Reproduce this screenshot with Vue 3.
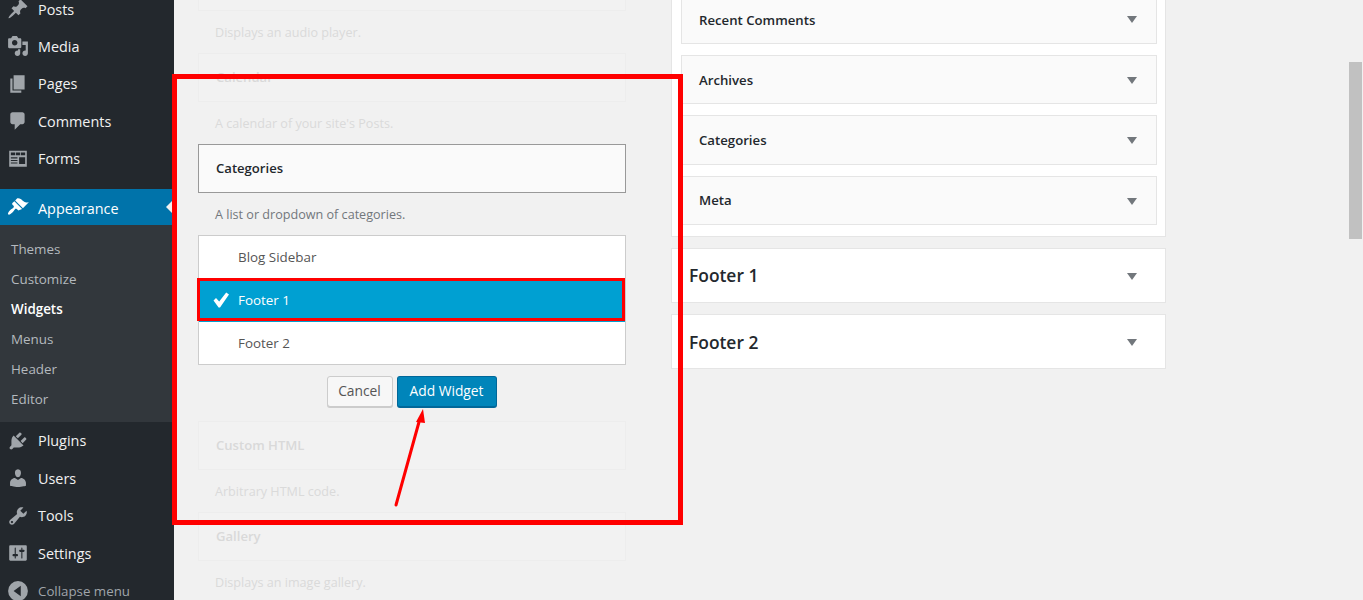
<script setup>
const icons = {
  posts: 'M10.44 3.02l1.82-1.82 6.36 6.35-1.83 1.82c-1.05-.68-2.48-.57-3.41.36l-.75.75c-.92.93-1.04 2.35-.35 3.41l-1.83 1.82-2.41-2.41-2.8 2.79c-.42.42-3.38 2.71-3.8 2.29s1.86-3.39 2.28-3.81l2.79-2.79L4.1 9.36l1.83-1.82c1.05.69 2.48.57 3.4-.36l.75-.75c.93-.92 1.05-2.35.36-3.41z',
  media: 'M13 11V4c0-.55-.45-1-1-1h-1.67L9 1H5L3.67 3H2c-.55 0-1 .45-1 1v7c0 .55.45 1 1 1h10c.55 0 1-.45 1-1zM7 4.5c1.38 0 2.5 1.12 2.5 2.5S8.38 9.5 7 9.5 4.5 8.38 4.5 7 5.62 4.5 7 4.5zM14 6h5v10.5c0 1.38-1.12 2.5-2.5 2.5S14 17.88 14 16.5s1.12-2.5 2.5-2.5c.17 0 .34.02.5.05V9h-3V6zm-4 8.05V13h2v3.5c0 1.38-1.12 2.5-2.5 2.5S7 17.88 7 16.5 8.12 14 9.5 14c.17 0 .34.02.5.05z',
  pages: 'M6 15V2h10v13H6zm-1 1h8v2H3V5h2v11z',
  comments: 'M5 2h9c1.1 0 2 .9 2 2v7c0 1.1-.9 2-2 2h-2l-5 5v-5H5c-1.1 0-2-.9-2-2V4c0-1.1.9-2 2-2z',
  forms: 'M2 2.5h16v14.5H2zM3.5 4v2.5h4V4zm4.7 0v2.5h3.6V4zm4.3 0v2.5h4V4zM3.5 8.5v1.1h6V8.5zm0 2.3v1.1h6v-1.1zm0 2.3v1.1h6v-1.1zM11 8.5v6h5.5v-6z',
  appearance: 'M14.48 11.06L7.41 3.99l1.5-1.5c.5-.56 2.3-.47 3.51.32 1.21.8 1.43 1.28 2.91 2.1 1.18.64 2.45 1.26 4.45.85zm-.71.71L6.7 4.7 4.93 6.47c-.39.39-.39 1.02 0 1.41l1.06 1.06c.39.39.39 1.03 0 1.42-.6.6-1.43 1.11-2.21 1.69-.35.26-.7.53-1.01.84-1.43 1.43-2.4 3.11-1.7 3.81.7.7 2.38-.27 3.81-1.7.31-.31.58-.66.84-1.01.58-.78 1.09-1.61 1.69-2.21.39-.39 1.03-.39 1.42 0l1.06 1.06c.39.39 1.02.39 1.41 0z',
  plugins: 'M13.11 4.36L9.87 7.6 8 5.73l3.24-3.24c.35-.34 1.05-.2 1.56.32.52.51.66 1.21.31 1.55zm-8 1.77l.91-1.12 9.01 9.01-1.19.84c-.71.71-2.63 1.16-3.82 1.16H6.14L4.9 17.26c-.59.59-1.54.59-2.12 0-.59-.58-.59-1.53 0-2.12l1.24-1.24v-3.88c0-1.13.4-3.19 1.09-3.89zm7.26 3.97l3.24-3.24c.34-.35 1.04-.21 1.55.31.52.51.66 1.21.31 1.55l-3.24 3.25z',
  users: 'M10 9.25c-2.27 0-2.73-3.44-2.73-3.44C7 4.02 7.82 2 9.97 2c2.16 0 2.98 2.02 2.71 3.81 0 0-.41 3.44-2.68 3.44zm0 2.57L12.72 10c2.39 0 4.52 2.33 4.52 4.53v2.49s-3.65 1.13-7.24 1.13c-3.65 0-7.24-1.13-7.24-1.13v-2.49c0-2.25 1.94-4.48 4.47-4.48z',
  tools: 'M16.68 9.77c-1.34 1.34-3.3 1.67-4.95.99l-5.41 6.52c-.99.99-2.59.99-3.58 0s-.99-2.59 0-3.57l6.52-5.42c-.68-1.65-.35-3.61.99-4.95 1.28-1.28 3.12-1.62 4.72-1.06l-2.89 2.89 2.82 2.82 2.86-2.87c.53 1.58.18 3.39-1.08 4.65zM3.81 16.21c.4.39 1.04.39 1.43 0 .4-.4.4-1.04 0-1.43-.39-.4-1.03-.4-1.43 0-.39.39-.39 1.03 0 1.43z',
  settings: 'M18 16V4c0-.55-.45-1-1-1H3c-.55 0-1 .45-1 1v12c0 .55.45 1 1 1h14c.55 0 1-.45 1-1zM8 11h1c.55 0 1 .45 1 1s-.45 1-1 1H8v1.5c0 .28-.22.5-.5.5s-.5-.22-.5-.5V13H6c-.55 0-1-.45-1-1s.45-1 1-1h1V5.5c0-.28.22-.5.5-.5s.5.22.5.5V11zm5-2h-1c-.55 0-1-.45-1-1s.45-1 1-1h1V5.5c0-.28.22-.5.5-.5s.5.22.5.5V7h1c.55 0 1 .45 1 1s-.45 1-1 1h-1v5.5c0 .28-.22.5-.5.5s-.5-.22-.5-.5V9z',
  collapse: 'M10 1a9 9 0 1 0 0 18 9 9 0 0 0 0-18zm2.5 4.2v9.6L6 10z'
}
const topMenu = [
  { label: 'Posts', icon: 'posts' },
  { label: 'Media', icon: 'media' },
  { label: 'Pages', icon: 'pages' },
  { label: 'Comments', icon: 'comments' },
  { label: 'Forms', icon: 'forms' }
]
const subMenu = ['Themes', 'Customize', 'Widgets', 'Menus', 'Header', 'Editor']
const bottomMenu = [
  { label: 'Plugins', icon: 'plugins' },
  { label: 'Users', icon: 'users' },
  { label: 'Tools', icon: 'tools' },
  { label: 'Settings', icon: 'settings' }
]
const sidebarWidgets = ['Recent Comments', 'Archives', 'Categories', 'Meta']
</script>

<template>
  <div class="page">
    <aside class="sidebar">
      <div v-for="m in topMenu" :key="m.label" class="item">
        <svg class="ico" viewBox="0 0 20 20"><path :d="icons[m.icon]" fill-rule="evenodd" /></svg>
        <span>{{ m.label }}</span>
      </div>
      <div class="item current">
        <svg class="ico" viewBox="0 0 20 20"><path :d="icons.appearance" /></svg>
        <span>Appearance</span>
        <i class="notch"></i>
      </div>
      <div class="sub">
        <div v-for="s in subMenu" :key="s" class="sub-item" :class="{ on: s === 'Widgets' }">{{ s }}</div>
      </div>
      <div v-for="m in bottomMenu" :key="m.label" class="item lower">
        <svg class="ico" viewBox="0 0 20 20"><path :d="icons[m.icon]" fill-rule="evenodd" /></svg>
        <span>{{ m.label }}</span>
      </div>
      <div class="item collapse">
        <svg class="ico" viewBox="0 0 20 20"><path :d="icons.collapse" fill-rule="evenodd" /></svg>
        <span>Collapse menu</span>
      </div>
    </aside>

    <main class="main">
      <section class="available">
        <div class="w-box faded"></div>
        <p class="desc faded-text">Displays an audio player.</p>
        <div class="w-box faded"><span class="faded-title">Calendar</span></div>
        <p class="desc faded-text">A calendar of your site's Posts.</p>

        <div class="w-box chosen"><strong>Categories</strong></div>
        <p class="desc">A list or dropdown of categories.</p>
        <ul class="areas">
          <li>Blog Sidebar</li>
          <li class="selected">
            <svg class="check" viewBox="0 0 20 20"><path d="M2.5 10.5 5 8l3.2 3.4L15.2 2.6 18 4.6 9 17.4h-1.4z" /></svg>
            Footer 1
          </li>
          <li>Footer 2</li>
        </ul>
        <div class="actions">
          <button class="btn cancel">Cancel</button>
          <button class="btn add">Add Widget</button>
        </div>

        <div class="w-box faded html"><span class="faded-title">Custom HTML</span></div>
        <p class="desc faded-text">Arbitrary HTML code.</p>
        <div class="w-box faded"><span class="faded-title">Gallery</span></div>
        <p class="desc faded-text">Displays an image gallery.</p>
      </section>

      <section class="areas-col">
        <div class="panel">
          <div v-for="w in sidebarWidgets" :key="w" class="side-widget">
            <span>{{ w }}</span>
            <i class="caret"></i>
          </div>
        </div>
        <div class="footer-area"><span>Footer 1</span><i class="caret"></i></div>
        <div class="footer-area"><span>Footer 2</span><i class="caret"></i></div>
      </section>
    </main>

    <div class="thumb"></div>
    <div class="mark-big"></div>
    <div class="mark-row"></div>
    <svg class="mark-arrow" width="60" height="110" viewBox="0 0 60 110">
      <path d="M6 100 29 17" stroke="#f00" stroke-width="3" stroke-linecap="round" fill="none" />
      <path d="M33 4 35 18 26 17z" fill="#f00" />
    </svg>
  </div>
</template>

<style>
html, body { margin: 0; padding: 0; background: #f1f1f1; overflow: hidden; }
</style>

<style scoped>
.page {
  position: relative;
  display: flex;
  width: 1363px;
  height: 600px;
  overflow: hidden;
  background: #f1f1f1;
  font-family: "Open Sans", "Noto Sans", sans-serif;
  font-size: 13px;
  color: #32373c;
}
.sidebar {
  flex: 0 0 174px;
  background: #23282d;
  color: #eee;
  margin-top: -10px;
  height: 620px;
}
.item {
  position: relative;
  display: flex;
  align-items: center;
  height: 37.5px;
  font-size: 14.4px;
  padding-left: 6.5px;
  color: #f1f1f1;
}
.item:first-child { box-sizing: border-box; padding-top: 1px; }
.ico { width: 22px; height: 22px; margin-right: 9.5px; fill: #a0a5aa; flex: none; }
.current {
  margin-top: 11.5px;
  box-sizing: border-box;
  height: 36px;
  padding-top: 2px;
  background: #0073aa;
  color: #fff;
}
.current .ico { fill: #fff; margin-top: -2px; }
.notch {
  position: absolute;
  right: 0;
  top: 10px;
  border: 8px solid transparent;
  border-right-color: #f1f1f1;
  border-left-width: 0;
}
.sub {
  background: #32373c;
  padding: 9px 0 8px;
  margin-bottom: 0.1px;
}
.sub-item {
  height: 30px;
  line-height: 30px;
  padding-left: 11px;
  font-size: 13.4px;
  color: #b4b9be;
}
.sub-item.on { color: #fff; font-weight: 600; }
.collapse { color: #a0a5aa; font-size: 13.3px; }
.collapse .ico { fill: #a0a5aa; }

.main {
  flex: 1;
  display: flex;
  align-items: flex-start;
  gap: 45px;
  padding-left: 24px;
}
.available { width: 428px; margin-top: -38px; flex: none; }
.w-box {
  box-sizing: border-box;
  height: 49px;
  display: flex;
  align-items: center;
  padding: 0 0 2px 17px;
  font-size: 13.1px;
}
.faded { border: 1px solid #ededed; background: #f2f2f2; }
.faded-title { color: #d9d9d9; font-weight: 600; }
.faded-text { color: #dadada !important; }
.html { margin-top: 12px; }
.chosen { border: 1px solid #999; background: #fafafa; }
.chosen strong { font-weight: 600; color: #23282d; }
.desc {
  box-sizing: border-box;
  margin: 0;
  height: 42px;
  line-height: 42px;
  padding: 1px 0 0 17px;
  font-size: 12.6px;
  color: #72777c;
}
.areas {
  list-style: none;
  margin: 0;
  padding: 0;
  border: 1px solid #ccc;
  background: #fff;
  box-sizing: border-box;
  height: 130px;
}
.areas li {
  position: relative;
  height: 43px;
  line-height: 43px;
  padding-left: 39px;
  color: #555;
  font-size: 13.4px;
}
.areas .selected { background: #00a0d2; color: #fff; }
.check { position: absolute; left: 12px; top: 11px; width: 20px; height: 20px; fill: #fff; }
.actions {
  display: flex;
  justify-content: center;
  gap: 4px;
  margin: 11px 0 0;
  height: 33px;
  padding-right: 1px;
  align-items: flex-start;
}
.btn {
  box-sizing: border-box;
  height: 32px;
  border-radius: 3px;
  font-family: inherit;
  font-size: 13.8px;
  padding: 0 0 2px;
}
.cancel {
  width: 66px;
  height: 31px;
  background: #f7f7f7;
  border: 1px solid #ccc;
  box-shadow: 0 1px 0 #ccc;
  color: #555;
}
.add {
  width: 100px;
  background: #0085ba;
  border: 1px solid #006799;
  border-bottom-width: 2px;
  color: #fff;
}
.areas-col { width: 495px; flex: none; margin-top: -17px; }
.panel {
  box-sizing: border-box;
  background: #fff;
  border: 1px solid #e5e5e5;
  border-top: 0;
  padding: 0 8px 11px 9px;
  height: 254px;
  display: flex;
  flex-direction: column;
  justify-content: flex-end;
  gap: 11px;
}
.side-widget {
  box-sizing: border-box;
  position: relative;
  flex: none;
  height: 49.5px;
  border: 1px solid #e5e5e5;
  background: #fafafa;
  display: flex;
  align-items: center;
  padding: 0.3px 0 0 17px;
  font-weight: 600;
  font-size: 13.2px;
  color: #23282d;
}
.side-widget:nth-child(-n+2) { padding-top: 1.5px; }
.footer-area {
  box-sizing: border-box;
  position: relative;
  height: 55px;
  margin-top: 11px;
  background: #fff;
  border: 1px solid #e5e5e5;
  display: flex;
  align-items: center;
  padding: 0 0 1px 17px;
  font-size: 17.4px;
  font-weight: 600;
  color: #23282d;
}
.footer-area:last-child { padding-bottom: 0; }
.caret {
  position: absolute;
  right: 19px;
  top: 50%;
  margin-top: -2.5px;
  border: solid transparent;
  border-width: 7px 5px 0;
  border-top-color: #72777c;
}
.footer-area .caret { right: 28px; margin-top: -3px; }

.thumb {
  position: absolute;
  left: 1349px;
  top: 62px;
  width: 13px;
  height: 177px;
  background: #c1c1c1;
}
.mark-big {
  position: absolute;
  left: 172px;
  top: 74px;
  width: 511px;
  height: 451px;
  box-sizing: border-box;
  border: 5px solid #f00;
}
.mark-row {
  position: absolute;
  left: 197px;
  top: 278px;
  width: 428px;
  height: 43px;
  box-sizing: border-box;
  border: 3px solid #f00;
}
.mark-arrow { position: absolute; left: 390px; top: 405px; }
</style>
